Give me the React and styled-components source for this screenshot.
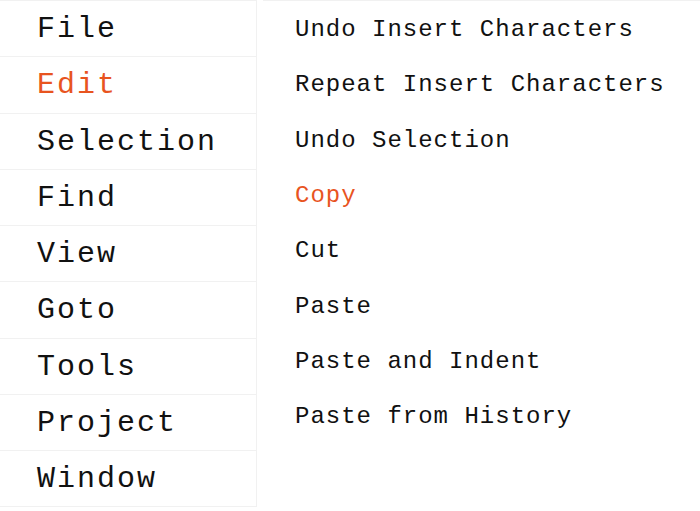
import styled, { createGlobalStyle } from 'styled-components';

const GlobalStyle = createGlobalStyle`
  body {
    margin: 0;
    background: #ffffff;
  }
`;

const menus = ['File', 'Edit', 'Selection', 'Find', 'View', 'Goto', 'Tools', 'Project', 'Window'];
const editItems = [
  'Undo Insert Characters',
  'Repeat Insert Characters',
  'Undo Selection',
  'Copy',
  'Cut',
  'Paste',
  'Paste and Indent',
  'Paste from History',
];

function App() {
  return (
    <Container>
      <GlobalStyle />
      <MenuBar>
        {menus.map((m) => (
          <MenuItem key={m} active={m === 'Edit'}>{m}</MenuItem>
        ))}
      </MenuBar>
      <SubMenu>
        {editItems.map((i) => (
          <SubItem key={i} active={i === 'Copy'}>{i}</SubItem>
        ))}
      </SubMenu>
    </Container>
  );
}

export default App;

const Container = styled.div`
  display: flex;
  width: 700px;
  height: 511px;
  overflow: hidden;
  font-family: "Liberation Mono", "Courier New", monospace;
  background: #fff;
`;

const MenuBar = styled.ul`
  list-style: none;
  margin: 0;
  padding: 0;
  width: 256px;
  border-top: 1px solid #f1f1f1;
  border-right: 1px solid #f1f1f1;
  flex-shrink: 0;
  align-self: flex-start;
`;

const MenuItem = styled.li`
  display: flex;
  align-items: center;
  box-sizing: content-box;
  height: 54.25px;
  padding: 1px 0 0 37px;
  border-bottom: 1px solid #f1f1f1;
  font-size: 30px;
  letter-spacing: 2px;
  color: ${(p) => (p.active ? '#e8541f' : '#111')};
`;

const SubMenu = styled.ul`
  list-style: none;
  margin: 0 0 0 6px;
  padding: 1px 0 0 32px;
  flex: 1;
  border-top: 1px solid #f1f1f1;
  align-self: flex-start;
`;

const SubItem = styled.li`
  height: 55.3px;
  display: flex;
  align-items: center;
  font-size: 24px;
  letter-spacing: 1px;
  color: ${(p) => (p.active ? '#e8541f' : '#111')};
`;
